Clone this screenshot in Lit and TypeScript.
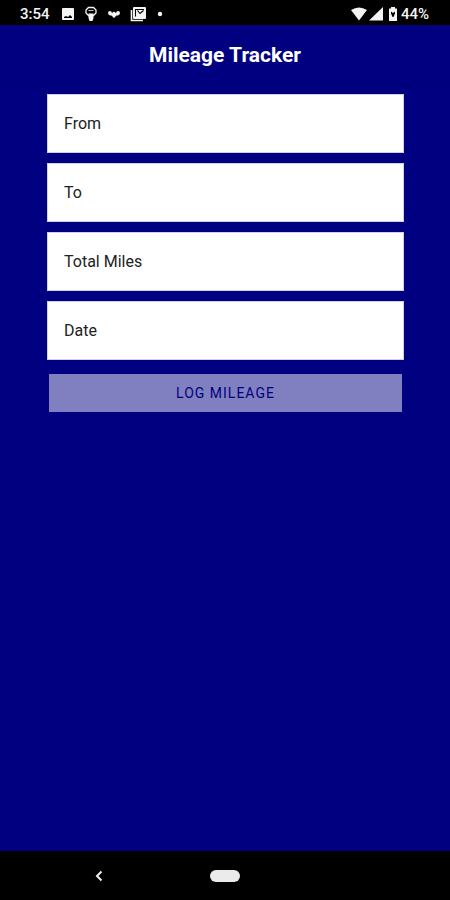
import { LitElement, html, css } from "lit";
import { customElement, state } from "lit/decorators.js";

interface Field {
  id: string;
  label: string;
}

const FIELDS: Field[] = [
  { id: "from", label: "From" },
  { id: "to", label: "To" },
  { id: "miles", label: "Total Miles" },
  { id: "date", label: "Date" },
];

@customElement("status-bar")
export class StatusBar extends LitElement {
  static styles = css`
    :host {
      display: flex;
      justify-content: space-between;
      align-items: center;
      height: 25px;
      padding: 2px 19px 0 20px;
      box-sizing: border-box;
      background: #000;
      color: #f4f4f4;
      font: 500 15px/16px Roboto, "Liberation Sans", sans-serif;
    }
    .group {
      display: flex;
      align-items: center;
    }
    .left {
      gap: 9px;
    }
    .right {
      gap: 2px;
    }
    .time {
      width: 32px;
    }
    .charge {
      width: 30px;
    }
    svg {
      display: block;
      fill: currentColor;
    }
  `;

  render() {
    return html`
      <div class="group left">
        <span class="time">3:54</span>
        <svg width="14" height="14" viewBox="0 0 14 14" aria-hidden="true">
          <path fill-rule="evenodd" d="M2 1h10a1 1 0 0 1 1 1v10a1 1 0 0 1-1 1H2a1 1 0 0 1-1-1V2a1 1 0 0 1 1-1zM3 11h8V10L9 8 7 10 5 9 3 10z" />
        </svg>
        <svg width="14" height="16" viewBox="0 0 14 16" aria-hidden="true">
          <path d="M4.500 9.500L2 7V4l2.500-2.500h5L12 4v3l-2.500 2.500z" fill="none" stroke="currentColor" stroke-width="1.300" />
          <path d="M4.500 7.500h5V12L8.500 15h-3L4.500 12z" />
          <path d="M4.500 4.500h5" stroke="currentColor" stroke-width="0.800" />
        </svg>
        <svg width="14" height="14" viewBox="0 0 14 14" aria-hidden="true">
          <path d="M1 6q0-2 2-2 1.500 0 2 2l2-1.500L9 6q.500-2 2-2 2 0 2 2 0 1.500-2 2.500L9.500 8.500 7 11 4.500 8.500 3 8.500Q1 7.500 1 6z" />
        </svg>
        <svg width="17" height="16" viewBox="0 0 17 16" aria-hidden="true">
          <path d="M1.500 4v10.500H13" fill="none" stroke="currentColor" stroke-width="1.600" />
          <rect x="3" y="1" width="13" height="12" rx="1" />
          <path d="M5.500 10.500V3.500H14M7.500 4.500L10 7.500L13.500 4.500" fill="none" stroke="#000" stroke-width="1.100" />
        </svg>
        <svg width="8" height="8" viewBox="0 0 8 8" aria-hidden="true">
          <circle cx="4" cy="4" r="2.200" />
        </svg>
      </div>
      <div class="group right">
        <svg width="16" height="14" viewBox="0 0 16 14" aria-hidden="true">
          <path d="M0 3Q8-2 16 3L8 13.500z" />
        </svg>
        <svg width="15" height="14" viewBox="0 0 15 14" aria-hidden="true">
          <path d="M14 0v13.500H0z" />
        </svg>
        <svg width="13" height="14" viewBox="0 0 13 14" aria-hidden="true">
          <path fill-rule="evenodd" d="M5 0h4v1.500h2V14H3V1.500h2zM5 4.500v2L6.500 10h1L9 6.500v-2L7 6z" />
        </svg>
        <span class="charge">44%</span>
      </div>
    `;
  }
}

@customElement("nav-bar")
export class NavBar extends LitElement {
  static styles = css`
    :host {
      display: grid;
      grid-template-columns: 1fr auto 1fr;
      column-gap: 12px;
      align-items: center;
      height: 49px;
      background: #000;
    }
    button {
      display: block;
      margin: 0;
      padding: 0;
      border: 0;
      background: none;
      color: #eee;
    }
    .back {
      justify-self: center;
    }
    .home {
      width: 30px;
      height: 12px;
      border-radius: 6px;
      background: #ebebeb;
    }
    svg {
      display: block;
    }
  `;

  render() {
    return html`
      <button class="back" aria-label="Back">
        <svg width="10" height="14" viewBox="0 0 10 14" aria-hidden="true">
          <path d="M7.500 2.500L3 7l4.500 4.500" fill="none" stroke="currentColor" stroke-width="2" />
        </svg>
      </button>
      <button class="home" aria-label="Home"></button>
    `;
  }
}

@customElement("app-root")
export class AppRoot extends LitElement {
  @state() private values: Record<string, string> = {};

  static styles = css`
    :host {
      display: flex;
      flex-direction: column;
      min-height: 100vh;
      background: #000080;
      font-family: Roboto, "Liberation Sans", sans-serif;
    }
    header {
      display: flex;
      justify-content: center;
      align-items: center;
      height: 59px;
      box-shadow: 0 1px 2px rgba(0, 0, 0, 0.1);
    }
    h1 {
      margin: 0;
      color: #fff;
      font-size: 21px;
      font-weight: 700;
      line-height: 28px;
    }
    main {
      flex: 1;
      padding: 10px 46px 0 47px;
    }
    form {
      display: flex;
      flex-direction: column;
      gap: 10px;
    }
    input {
      box-sizing: border-box;
      width: 100%;
      height: 59px;
      margin: 0;
      padding: 0 16px;
      border: 1px solid #d0d0e8;
      border-radius: 0;
      outline: 0;
      background: #fff;
      color: #222;
      font: 400 16px/20px Roboto, "Liberation Sans", sans-serif;
    }
    input::placeholder {
      color: #222;
      opacity: 1;
    }
    .submit {
      height: 38px;
      margin: 4px 2px 0;
      padding: 0;
      border: 0;
      background: #8080c0;
      color: #000080;
      font: 400 14px/20px Roboto, "Liberation Sans", sans-serif;
      letter-spacing: 1px;
      text-transform: uppercase;
    }
  `;

  private store(id: string, e: Event) {
    this.values = { ...this.values, [id]: (e.target as HTMLInputElement).value };
  }

  render() {
    const ready = FIELDS.every((f) => this.values[f.id]);
    return html`
      <status-bar></status-bar>
      <header><h1>Mileage Tracker</h1></header>
      <main>
        <form @submit=${(e: Event) => e.preventDefault()}>
          ${FIELDS.map(
            (f) => html`<input
              type="text"
              name=${f.id}
              aria-label=${f.label}
              placeholder=${f.label}
              @input=${(e: Event) => this.store(f.id, e)}
            />`
          )}
          <button class="submit" type="submit" ?disabled=${!ready}>Log Mileage</button>
        </form>
      </main>
      <nav-bar></nav-bar>
    `;
  }
}
